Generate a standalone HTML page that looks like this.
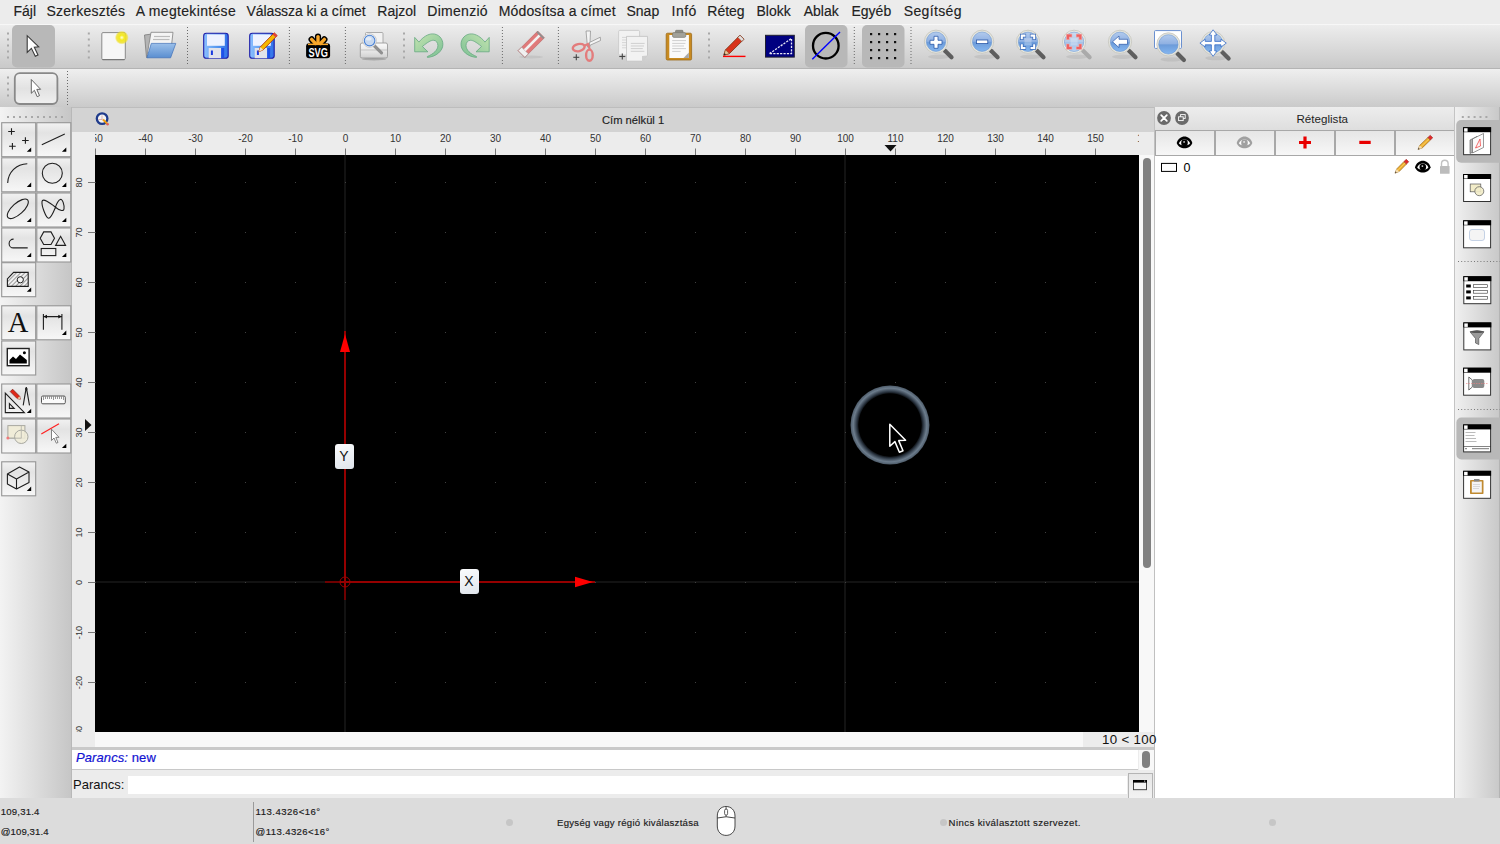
<!DOCTYPE html><html><head><meta charset="utf-8"><title>LibreCAD</title><style>
*{box-sizing:border-box;margin:0;padding:0}
html,body{width:1500px;height:844px;overflow:hidden;background:#ececec;font-family:"Liberation Sans",sans-serif;color:#222}
.abs{position:absolute}
#menubar{left:0;top:0;width:1500px;height:24px;background:#ececec}
#menubar span{position:absolute;top:3px;font-size:14px;color:#222;white-space:pre;-webkit-text-stroke:0.15px #222}
#tb1{left:0;top:24px;width:1500px;height:45px;background:linear-gradient(#ededed,#c9c9c9);border-top:1px solid #f7f7f7;border-bottom:1.5px solid #b4b4b4}
#tb2{left:0;top:69px;width:1500px;height:39px;background:linear-gradient(#efefef,#cacaca);border-bottom:1.5px solid #b6b6b6}
.hl{position:absolute;background:#b9b9b9;border-radius:5px}
.handle{position:absolute;width:3px;background-image:radial-gradient(circle,#9a9a9a 1px,transparent 1.3px);background-size:3px 6px}
.sep{position:absolute;width:1px;background-image:linear-gradient(#7a7a7a 50%,transparent 50%);background-size:1px 3px}
#ldock{left:0;top:107px;width:71px;height:691px;background:linear-gradient(90deg,#f3f3f3,#c6c6c6)}
#ldockb{left:71px;top:107px;width:1px;height:691px;background:#b8b8b8}
.tbtn{position:absolute;width:35px;height:35px;border:1px solid #a2a2a2;background:linear-gradient(#e4e4e4,#f6f6f6)}
#mdititle{left:72px;top:107px;width:1082px;height:25px;background:#d3d3d3}
#rtop{left:72px;top:132px;width:1082px;height:23px;background:#ececec}
#rleft{left:72px;top:155px;width:23px;height:592px;background:#ececec}
#canvas{left:95px;top:155px;width:1044px;height:577px;background:#000}
#rstrip{left:1139px;top:155px;width:15px;height:592px;background:#f8f8f8}
#bstrip{left:95px;top:732px;width:1044px;height:15px;background:#f8f8f8}
#scale{left:1083px;top:732px;width:71px;height:15px;background:#ececec}
#cmdsep{left:72px;top:747px;width:1082px;height:3px;background:#c9c9c9}
#cmdhist{left:72px;top:750px;width:1082px;height:20px;background:#fff;border-bottom:1px solid #c8c8c8}
#cmdline{left:72px;top:771px;width:1082px;height:27px;background:#ececec}
#status{left:0;top:798px;width:1500px;height:46px;background:#dcdcdc}
#dockb{left:1153.5px;top:107px;width:2px;height:691px;background:#c0c0c0}
#ldk{left:1155px;top:107px;width:300px;height:691px;background:#fff}
#ldktitle{left:1155px;top:107px;width:300px;height:23px;background:linear-gradient(#ededed,#dedede)}
#rtb{left:1455px;top:107px;width:45px;height:691px;background:linear-gradient(90deg,#f0f0f0,#c8c8c8)}
#rtbb{left:1454px;top:107px;width:1px;height:691px;background:#c4c4c4}
.lbtn{position:absolute;top:130px;height:26px;border:1px solid #a8a8a8;background:linear-gradient(#e6e6e6,#f7f7f7)}
.st{font-size:10px;color:#1a1a1a;white-space:pre;-webkit-text-stroke:0.15px #1a1a1a}
.rl{position:absolute;font-size:10px;color:#333;white-space:pre}
</style></head><body>
<div id="menubar" class="abs">
<span style="left:13.5px;letter-spacing:0px">Fájl</span>
<span style="left:46.5px;letter-spacing:0.23px">Szerkesztés</span>
<span style="left:135.7px;letter-spacing:0.33px">A megtekintése</span>
<span style="left:246.5px;letter-spacing:-0.08px">Válassza ki a címet</span>
<span style="left:377.3px;letter-spacing:0px">Rajzol</span>
<span style="left:427.3px;letter-spacing:0.28px">Dimenzió</span>
<span style="left:498.7px;letter-spacing:0.16px">Módosítsa a címet</span>
<span style="left:626.5px;letter-spacing:0px">Snap</span>
<span style="left:671.5px;letter-spacing:0.5px">Infó</span>
<span style="left:707.3px;letter-spacing:0px">Réteg</span>
<span style="left:756.5px;letter-spacing:0px">Blokk</span>
<span style="left:803.7px;letter-spacing:0px">Ablak</span>
<span style="left:851.5px;letter-spacing:0px">Egyéb</span>
<span style="left:903.7px;letter-spacing:0.36px">Segítség</span>
</div>
<div id="tb1" class="abs"></div>
<div id="tb2" class="abs"></div>
<svg class="abs" style="left:0;top:24px" width="1500" height="83" viewBox="0 24 1500 83"><defs>
<linearGradient id="lensg" x1="0" y1="0" x2="0" y2="1"><stop offset="0" stop-color="#b3cbed"/><stop offset="0.48" stop-color="#8fb0e2"/><stop offset="0.52" stop-color="#6c9bd9"/><stop offset="1" stop-color="#84b6f0"/></linearGradient>
<linearGradient id="lensf" x1="0" y1="0" x2="0" y2="1"><stop offset="0" stop-color="#ccdcf0"/><stop offset="0.5" stop-color="#b4cbe9"/><stop offset="0.52" stop-color="#a6c2e8"/><stop offset="1" stop-color="#b6d2f2"/></linearGradient>
<linearGradient id="saveg" x1="0" y1="0" x2="1" y2="0"><stop offset="0" stop-color="#8cc0ff"/><stop offset="0.5" stop-color="#5a9af0"/><stop offset="1" stop-color="#3070e8"/></linearGradient>
<linearGradient id="undog" x1="0" y1="0" x2="1" y2="1"><stop offset="0" stop-color="#c4e4b0"/><stop offset="1" stop-color="#7cc094"/></linearGradient>
<linearGradient id="foldg" x1="0" y1="0" x2="0" y2="1"><stop offset="0" stop-color="#9cc0ea"/><stop offset="1" stop-color="#5a8ed0"/></linearGradient>
<radialGradient id="glow"><stop offset="0" stop-color="#ffffe0"/><stop offset="0.35" stop-color="#f4ea20"/><stop offset="0.75" stop-color="#f0e020" stop-opacity="0.8"/><stop offset="1" stop-color="#f0e020" stop-opacity="0"/></radialGradient>
</defs><rect x="12" y="25" width="43" height="42.5" rx="5" fill="#b8b8b8"/><rect x="805" y="25" width="42.5" height="42.5" rx="5" fill="#b8b8b8"/><rect x="862" y="25" width="42.5" height="42.5" rx="5" fill="#b8b8b8"/><rect x="7.0" y="32.5" width="2" height="2" fill="#a8a8a8"/><rect x="7.0" y="38.5" width="2" height="2" fill="#a8a8a8"/><rect x="7.0" y="44.5" width="2" height="2" fill="#a8a8a8"/><rect x="7.0" y="50.5" width="2" height="2" fill="#a8a8a8"/><rect x="7.0" y="56.5" width="2" height="2" fill="#a8a8a8"/><rect x="87.8" y="32.5" width="2" height="2" fill="#a8a8a8"/><rect x="87.8" y="38.5" width="2" height="2" fill="#a8a8a8"/><rect x="87.8" y="44.5" width="2" height="2" fill="#a8a8a8"/><rect x="87.8" y="50.5" width="2" height="2" fill="#a8a8a8"/><rect x="87.8" y="56.5" width="2" height="2" fill="#a8a8a8"/><rect x="403.0" y="32.5" width="2" height="2" fill="#a8a8a8"/><rect x="403.0" y="38.5" width="2" height="2" fill="#a8a8a8"/><rect x="403.0" y="44.5" width="2" height="2" fill="#a8a8a8"/><rect x="403.0" y="50.5" width="2" height="2" fill="#a8a8a8"/><rect x="403.0" y="56.5" width="2" height="2" fill="#a8a8a8"/><rect x="708.0" y="32.5" width="2" height="2" fill="#a8a8a8"/><rect x="708.0" y="38.5" width="2" height="2" fill="#a8a8a8"/><rect x="708.0" y="44.5" width="2" height="2" fill="#a8a8a8"/><rect x="708.0" y="50.5" width="2" height="2" fill="#a8a8a8"/><rect x="708.0" y="56.5" width="2" height="2" fill="#a8a8a8"/><line x1="187.5" y1="27" x2="187.5" y2="66" stroke="#6a6a6a" stroke-width="1" stroke-dasharray="1 2"/><line x1="289.4" y1="27" x2="289.4" y2="66" stroke="#6a6a6a" stroke-width="1" stroke-dasharray="1 2"/><line x1="345.4" y1="27" x2="345.4" y2="66" stroke="#6a6a6a" stroke-width="1" stroke-dasharray="1 2"/><line x1="502.4" y1="27" x2="502.4" y2="66" stroke="#6a6a6a" stroke-width="1" stroke-dasharray="1 2"/><line x1="558.4" y1="27" x2="558.4" y2="66" stroke="#6a6a6a" stroke-width="1" stroke-dasharray="1 2"/><line x1="854.3" y1="27" x2="854.3" y2="66" stroke="#6a6a6a" stroke-width="1" stroke-dasharray="1 2"/><line x1="911" y1="27" x2="911" y2="66" stroke="#6a6a6a" stroke-width="1" stroke-dasharray="1 2"/><path d="M27.2 35.7 L27.2 52.4 L31.4 48.3 L35.3 56.2 L38 54.9 L34.3 47.2 L38.7 46.8 Z" fill="#fff" stroke="#3a3a3a" stroke-width="1.1" stroke-linejoin="miter"/><rect x="101.8" y="32.6" width="23.5" height="27" rx="1.2" fill="#f6f6f6" stroke="#8a8a8a" stroke-width="1"/><line x1="102.5" y1="59.6" x2="124.5" y2="59.6" stroke="#777" stroke-width="1.2"/><circle cx="121.8" cy="37.6" r="7" fill="url(#glow)"/><path d="M144.5 35 L152 34 L152 56 L146.5 57.5 Z" fill="#b4b4b4" stroke="#7a7a7a" stroke-width="0.8"/><path d="M151 32.3 L173 32.3 L171 50 L147 56 Z" fill="#f4f4f4" stroke="#808080" stroke-width="0.8"/><line x1="154" y1="36.5" x2="170" y2="36.5" stroke="#bbb" stroke-width="1.2"/><line x1="153" y1="39.5" x2="169.5" y2="39.5" stroke="#bbb" stroke-width="1.2"/><path d="M151.3 43.4 L175.8 43.4 L170.6 57.8 L146.9 57.8 Z" fill="url(#foldg)" stroke="#3f70b8" stroke-width="0.7"/><rect x="203.7" y="33.3" width="24.5" height="25" rx="2.6" fill="url(#saveg)" stroke="#1c1ca8" stroke-width="1.1"/><rect x="207.0" y="34.4" width="17.8" height="11.4" fill="#eef2ff"/><rect x="208.7" y="48" width="12.5" height="10.2" fill="#e2e2ea"/><rect x="210.89999999999998" y="50.5" width="2" height="4.5" fill="#1a3ae0"/><rect x="221.2" y="48" width="3" height="10" fill="#1f50e8"/><rect x="249.7" y="33.3" width="24.5" height="25" rx="2.6" fill="url(#saveg)" stroke="#1c1ca8" stroke-width="1.1"/><rect x="253.0" y="34.4" width="17.8" height="11.4" fill="#eef2ff"/><rect x="254.7" y="48" width="12.5" height="10.2" fill="#e2e2ea"/><rect x="256.9" y="50.5" width="2" height="4.5" fill="#1a3ae0"/><rect x="267.2" y="48" width="3" height="10" fill="#1f50e8"/><path d="M258.8 51.8 L260.3 47 L274.2 32.8 L277.2 35.6 L263.2 49.8 Z" fill="#f5b800" stroke="#b83a10" stroke-width="0.9"/><path d="M258.8 51.8 L260.3 47 L263.2 49.8 Z" fill="#f0e0c0"/><path d="M274.2 32.8 L277.2 35.6 L275.6 37.2 L272.6 34.4 Z" fill="#e04040"/><g stroke="#000" stroke-width="6.2" stroke-linecap="round"><line x1="318" y1="36.6" x2="318" y2="44"/><line x1="311.6" y1="39.4" x2="315" y2="44"/><line x1="324.4" y1="39.4" x2="321" y2="44"/></g><rect x="306.1" y="43.2" width="24" height="15" rx="3" fill="#000"/><g stroke="#f9a72a" stroke-width="3.4" stroke-linecap="round"><line x1="318" y1="36.6" x2="318" y2="43"/><line x1="311.6" y1="39.4" x2="315.5" y2="43.5"/><line x1="324.4" y1="39.4" x2="320.5" y2="43.5"/></g><rect x="308" y="43.6" width="20" height="1.5" fill="#f9a72a"/><text x="318.2" y="56.6" font-family="Liberation Sans" font-weight="bold" font-size="13.5" fill="#fff" text-anchor="middle" textLength="19.5" lengthAdjust="spacingAndGlyphs">SVG</text><defs><linearGradient id="prg" x1="0" y1="0" x2="0" y2="1"><stop offset="0" stop-color="#fbfbfb"/><stop offset="0.6" stop-color="#e4e4e4"/><stop offset="1" stop-color="#cfcfcf"/></linearGradient></defs><rect x="365.5" y="32.5" width="17.5" height="13" rx="1" fill="#f2f2f2" stroke="#a4a4a4" stroke-width="0.9"/><path d="M362 43 L386 43 Q387.5 43 387.5 45 L387.5 56.5 Q387.5 58 386 58 L362 58 Q360.3 58 360.3 56.5 L360.3 45 Q360.3 43 362 43 Z" fill="url(#prg)" stroke="#9a9a9a" stroke-width="0.9"/><rect x="361" y="49.5" width="26" height="1" fill="#c4c4c4"/><ellipse cx="374" cy="59.2" rx="12" ry="1.2" fill="#777" opacity="0.45"/><line x1="373.5" y1="45" x2="381.5" y2="52.8" stroke="#909090" stroke-width="3.2" stroke-linecap="round"/><circle cx="369.6" cy="40.6" r="6.8" fill="#fafafa" stroke="#b8b8b8" stroke-width="0.7"/><circle cx="369.6" cy="40.6" r="5.3" fill="#c6d8f0" stroke="#4a82d4" stroke-width="1.1"/><ellipse cx="368.6" cy="38.8" rx="3" ry="1.8" fill="#fff" opacity="0.5"/><path d="M414.7 37.4 L418.9 42.1 C423 37 428 33.9 432.6 33.9 C438.5 33.9 442.9 38.5 442.9 44.4 C442.9 51 436 56.8 427.4 57.4 L427.4 56.5 C433.5 54 437.9 50 437.9 45.6 C437.9 42.5 436 40.3 433.5 40.3 C431 40.3 428 41.8 422.4 46.5 L427.9 51.8 L414.7 51.8 Z" fill="url(#undog)" stroke="#64a880" stroke-width="0.8" stroke-linejoin="round"/><path d="M414.7 37.4 L418.9 42.1 C423 37 428 33.9 432.6 33.9 C438.5 33.9 442.9 38.5 442.9 44.4 C442.9 51 436 56.8 427.4 57.4 L427.4 56.5 C433.5 54 437.9 50 437.9 45.6 C437.9 42.5 436 40.3 433.5 40.3 C431 40.3 428 41.8 422.4 46.5 L427.9 51.8 L414.7 51.8 Z" transform="translate(903.9 0) scale(-1 1)" fill="url(#undog)" stroke="#64a880" stroke-width="0.8" stroke-linejoin="round"/><ellipse cx="531" cy="57" rx="12" ry="1.4" fill="#bbb" opacity="0.6"/><g transform="rotate(-45 531.2 44.2)"><rect x="517.4" y="39.5" width="27.6" height="9.5" fill="#e07a7a" stroke="#b86060" stroke-width="0.6"/><rect x="517.4" y="39.5" width="5" height="9.5" fill="#f0f0f0" stroke="#a08080" stroke-width="0.6"/><rect x="522.4" y="42.6" width="22" height="2.6" fill="#f2f2f2"/><rect x="543.2" y="39.5" width="1.8" height="9.5" fill="#909090"/></g><path d="M586 31 L590.5 31 L589.8 47 L587.5 47 Z" fill="#f4f4f4" stroke="#8a8a8a" stroke-width="0.7"/><path d="M589.5 42.5 L600.3 37.2 L600.5 40.5 L589.5 45.5 Z" fill="#f4f4f4" stroke="#8a8a8a" stroke-width="0.7"/><ellipse cx="578.7" cy="47.6" rx="6" ry="3.6" fill="none" stroke="#e37c7c" stroke-width="2.4" transform="rotate(-12 578.7 47.6)"/><ellipse cx="589.4" cy="55.2" rx="3.3" ry="5.6" fill="none" stroke="#e37c7c" stroke-width="2.4"/><path d="M583.8 46 L588 44 L590 50" fill="none" stroke="#e37c7c" stroke-width="2.2"/><g stroke="#444" stroke-width="1.1"><line x1="573.3" y1="57.3" x2="579.3" y2="57.3"/><line x1="576.3" y1="54.3" x2="576.3" y2="60.3"/></g><rect x="618.6" y="30.4" width="21" height="24.6" rx="1.2" fill="#f2f2f2" stroke="#c6c6c6" stroke-width="0.8"/><g stroke="#d6d6d6" stroke-width="1"><line x1="622" y1="37.4" x2="628" y2="37.4"/><line x1="622" y1="40" x2="628" y2="40"/><line x1="622" y1="42.6" x2="628" y2="42.6"/><line x1="622" y1="45.2" x2="628" y2="45.2"/><line x1="622" y1="47.8" x2="628" y2="47.8"/></g><path d="M626.5 36.4 L647.5 36.4 L647.5 55.5 L642 61.2 L626.5 61.2 Z" fill="#f2f2f2" stroke="#c2c2c2" stroke-width="0.8"/><path d="M642 61.2 L642 56 L647.5 55.5 Z" fill="#cfcfcf"/><g stroke="#cfcfcf" stroke-width="1"><line x1="630.8" y1="43.4" x2="644.6" y2="43.4"/><line x1="630.8" y1="46" x2="644" y2="46"/><line x1="630.8" y1="48.6" x2="642.8" y2="48.6"/><line x1="630.8" y1="51.3" x2="644.4" y2="51.3"/></g><g stroke="#444" stroke-width="1.1"><line x1="619.3" y1="56.5" x2="625.3" y2="56.5"/><line x1="622.3" y1="53.5" x2="622.3" y2="59.5"/></g><rect x="666.2" y="33.2" width="25.4" height="26.8" rx="1.3" fill="#c88a20" stroke="#9c6a18" stroke-width="0.8"/><rect x="669.3" y="35" width="19.6" height="23" fill="#fafafa"/><path d="M683.5 58 L688.9 52.5 L688.9 58 Z" fill="#a8a8a8"/><g stroke="#cfcfcf" stroke-width="1"><line x1="672.2" y1="40.6" x2="686" y2="40.6"/><line x1="672.2" y1="43.4" x2="685.4" y2="43.4"/><line x1="672.2" y1="46" x2="684" y2="46"/><line x1="672.2" y1="48.6" x2="686" y2="48.6"/><line x1="672.2" y1="51.4" x2="680.6" y2="51.4"/></g><rect x="675.5" y="30.3" width="7.5" height="3" rx="0.8" fill="#8c8c84" stroke="#6e6e66" stroke-width="0.6"/><rect x="672.5" y="32.6" width="13.3" height="4.8" rx="1.4" fill="#a2a29a" stroke="#76766e" stroke-width="0.6"/><line x1="723" y1="56.4" x2="745.5" y2="56.4" stroke="#f00" stroke-width="1.4"/><path d="M723.8 55.2 L725.5 49.8 L740 35.2 L744 39.2 L729.4 53.6 Z" fill="#d8341c" stroke="#7a3010" stroke-width="0.8"/><path d="M723.8 55.2 L725.5 49.8 L729.4 53.6 Z" fill="#e8c898" stroke="#7a3010" stroke-width="0.5"/><path d="M723.8 55.2 L724.5 53 L726 54.5 Z" fill="#222"/><path d="M737.8 37.4 L740 35.2 L744 39.2 L741.8 41.4 Z" fill="#e0e0e0" stroke="#7a3010" stroke-width="0.5"/><rect x="765.5" y="35.3" width="28.8" height="21.8" fill="#000080" stroke="#202030" stroke-width="1"/><path d="M769.5 53.6 L791.5 38.5 L791.5 53.6 Z" fill="none" stroke="#e8e8f4" stroke-width="1.3" stroke-dasharray="2.2 1.2"/><circle cx="825.8" cy="45.7" r="12.8" fill="none" stroke="#000" stroke-width="2.3"/><line x1="812.3" y1="59.3" x2="840" y2="32" stroke="#0000ff" stroke-width="1.4"/><rect x="870" y="33" width="2.2" height="2.2" fill="#111"/><rect x="870" y="41" width="2.2" height="2.2" fill="#111"/><rect x="870" y="49" width="2.2" height="2.2" fill="#111"/><rect x="870" y="57" width="2.2" height="2.2" fill="#111"/><rect x="878" y="33" width="2.2" height="2.2" fill="#111"/><rect x="878" y="41" width="2.2" height="2.2" fill="#111"/><rect x="878" y="49" width="2.2" height="2.2" fill="#111"/><rect x="878" y="57" width="2.2" height="2.2" fill="#111"/><rect x="886" y="33" width="2.2" height="2.2" fill="#111"/><rect x="886" y="41" width="2.2" height="2.2" fill="#111"/><rect x="886" y="49" width="2.2" height="2.2" fill="#111"/><rect x="886" y="57" width="2.2" height="2.2" fill="#111"/><rect x="894" y="33" width="2.2" height="2.2" fill="#111"/><rect x="894" y="41" width="2.2" height="2.2" fill="#111"/><rect x="894" y="49" width="2.2" height="2.2" fill="#111"/><rect x="894" y="57" width="2.2" height="2.2" fill="#111"/><g opacity="1"><ellipse cx="939" cy="56.7" rx="11" ry="2.2" fill="#000" opacity="0.07"/><line x1="945" y1="50.7" x2="951.5" y2="57.2" stroke="#5e5e5e" stroke-width="4.2" stroke-linecap="round"/><circle cx="936" cy="41.7" r="11.6" fill="#e6e6de" stroke="#c4c4bc" stroke-width="0.8"/><circle cx="936" cy="41.7" r="9.7" fill="url(#lensg)" stroke="#5f8fcf" stroke-width="0.5"/></g><path d="M934 36.3 h4 v4 h4 v4 h-4 v4 h-4 v-4 h-4 v-4 h4 z" fill="#fff" stroke="#2a58a8" stroke-width="0.8"/><g opacity="1"><ellipse cx="985.1" cy="56.7" rx="11" ry="2.2" fill="#000" opacity="0.07"/><line x1="991.1" y1="50.7" x2="997.6" y2="57.2" stroke="#5e5e5e" stroke-width="4.2" stroke-linecap="round"/><circle cx="982.1" cy="41.7" r="11.6" fill="#e6e6de" stroke="#c4c4bc" stroke-width="0.8"/><circle cx="982.1" cy="41.7" r="9.7" fill="url(#lensg)" stroke="#5f8fcf" stroke-width="0.5"/></g><rect x="976.4" y="40" width="11.4" height="3.6" fill="#fff" stroke="#2a58a8" stroke-width="0.8"/><g opacity="1"><ellipse cx="1031" cy="56.8" rx="11" ry="2.2" fill="#000" opacity="0.07"/><line x1="1037" y1="50.8" x2="1043.5" y2="57.3" stroke="#5e5e5e" stroke-width="4.2" stroke-linecap="round"/><circle cx="1028" cy="41.8" r="11.6" fill="#e6e6de" stroke="#c4c4bc" stroke-width="0.8"/><circle cx="1028" cy="41.8" r="9.7" fill="url(#lensg)" stroke="#5f8fcf" stroke-width="0.5"/></g><rect x="1024.5" y="38.3" width="7" height="7" fill="#fff" opacity="0.25"/><path d="M1021.8 39.9 V35.6 H1026.1 M1029.9 35.6 H1034.2 V39.9 M1034.2 43.7 V48.0 H1029.9 M1026.1 48.0 H1021.8 V43.7" fill="none" stroke="#3a6ab8" stroke-width="3.6"/><path d="M1021.8 39.3 V35.6 H1025.5 M1030.5 35.6 H1034.2 V39.3 M1034.2 44.3 V48.0 H1030.5 M1025.5 48.0 H1021.8 V44.3" fill="none" stroke="#fff" stroke-width="2.1"/><g opacity="1"><ellipse cx="1077.1" cy="56.8" rx="11" ry="2.2" fill="#000" opacity="0.07"/><line x1="1083.1" y1="50.8" x2="1089.6" y2="57.3" stroke="#aaaaaa" stroke-width="4.2" stroke-linecap="round"/><circle cx="1074.1" cy="41.8" r="11.6" fill="#ecece6" stroke="#c4c4bc" stroke-width="0.8"/><circle cx="1074.1" cy="41.8" r="9.7" fill="url(#lensf)" stroke="#5f8fcf" stroke-width="0.5"/></g><rect x="1070.6" y="38.3" width="7" height="7" fill="#fff" opacity="0.25"/><path d="M1067.9 39.9 V35.6 H1072.2 M1076.0 35.6 H1080.3 V39.9 M1080.3 43.7 V48.0 H1076.0 M1072.2 48.0 H1067.9 V43.7" fill="none" stroke="#eaa8a8" stroke-width="3.6"/><path d="M1067.9 39.3 V35.6 H1071.6 M1076.6 35.6 H1080.3 V39.3 M1080.3 44.3 V48.0 H1076.6 M1071.6 48.0 H1067.9 V44.3" fill="none" stroke="#f06060" stroke-width="2.1"/><g opacity="1"><ellipse cx="1123" cy="56.8" rx="11" ry="2.2" fill="#000" opacity="0.07"/><line x1="1129" y1="50.8" x2="1135.5" y2="57.3" stroke="#5e5e5e" stroke-width="4.2" stroke-linecap="round"/><circle cx="1120" cy="41.8" r="11.6" fill="#e6e6de" stroke="#c4c4bc" stroke-width="0.8"/><circle cx="1120" cy="41.8" r="9.7" fill="url(#lensg)" stroke="#5f8fcf" stroke-width="0.5"/></g><path d="M1112.5 41.8 L1119 36 L1119 39.3 L1127.5 39.3 L1127.5 44.3 L1119 44.3 L1119 47.6 Z" fill="#fff" stroke="#2a58a8" stroke-width="0.7"/><rect x="1154.5" y="30.6" width="27" height="17.8" rx="1" fill="#fff" stroke="#6a90d0" stroke-width="1"/><g opacity="1"><ellipse cx="1171.4" cy="59.4" rx="11" ry="2.2" fill="#000" opacity="0.07"/><line x1="1177.4" y1="53.4" x2="1183.9" y2="59.9" stroke="#5e5e5e" stroke-width="4.2" stroke-linecap="round"/><circle cx="1168.4" cy="44.4" r="11.6" fill="#e6e6de" stroke="#c4c4bc" stroke-width="0.8"/><circle cx="1168.4" cy="44.4" r="9.7" fill="url(#lensg)" stroke="#5f8fcf" stroke-width="0.5"/></g><g opacity="1"><ellipse cx="1216.1" cy="58.1" rx="11" ry="2.2" fill="#000" opacity="0.07"/><line x1="1222.1" y1="52.1" x2="1228.6" y2="58.6" stroke="#5e5e5e" stroke-width="4.2" stroke-linecap="round"/><circle cx="1213.1" cy="43.1" r="11.6" fill="#e6e6de" stroke="#c4c4bc" stroke-width="0.8"/><circle cx="1213.1" cy="43.1" r="9.7" fill="url(#lensg)" stroke="#5f8fcf" stroke-width="0.5"/></g><g fill="#fff" stroke="#3a70c8" stroke-width="0.8"><path d="M1213.1 29.8 L1217 35 L1214.8 35 L1214.8 41.4 L1221 41.4 L1221 39.2 L1226.3 43.1 L1221 47 L1221 44.8 L1214.8 44.8 L1214.8 51 L1217 51 L1213.1 56.3 L1209.2 51 L1211.4 51 L1211.4 44.8 L1205.2 44.8 L1205.2 47 L1199.9 43.1 L1205.2 39.2 L1205.2 41.4 L1211.4 41.4 L1211.4 35 L1209.2 35 Z"/></g><rect x="7" y="76.5" width="2" height="2" fill="#a8a8a8"/><rect x="7" y="82.5" width="2" height="2" fill="#a8a8a8"/><rect x="7" y="88.5" width="2" height="2" fill="#a8a8a8"/><rect x="7" y="94.5" width="2" height="2" fill="#a8a8a8"/><rect x="14.8" y="73.2" width="42.6" height="30.8" rx="5" fill="url(#tb2btn)" stroke="#898989" stroke-width="1.8"/><defs><linearGradient id="tb2btn" x1="0" y1="0" x2="0" y2="1"><stop offset="0" stop-color="#f2f2f2"/><stop offset="0.5" stop-color="#e2e2e2"/><stop offset="1" stop-color="#f0f0f0"/></linearGradient></defs><path d="M31.3 79.5 L31.3 93.3 L34.4 90.3 L37.2 96.7 L39.5 95.6 L36.8 89.4 L40.6 89.3 Z" fill="#fff" stroke="#555" stroke-width="0.9"/><line x1="67.5" y1="71" x2="67.5" y2="105" stroke="#6a6a6a" stroke-width="1" stroke-dasharray="1 2"/></svg>
<div id="ldock" class="abs"></div><div id="ldockb" class="abs"></div>
<svg class="abs" style="left:0;top:107px" width="72" height="400" viewBox="0 107 72 400"><defs><linearGradient id="btng" x1="0" y1="0" x2="0" y2="1"><stop offset="0" stop-color="#f2f2f2"/><stop offset="0.3" stop-color="#e3e3e3"/><stop offset="1" stop-color="#f7f7f7"/></linearGradient></defs><rect x="7" y="116" width="2" height="2" fill="#a8a8a8"/><rect x="13" y="116" width="2" height="2" fill="#a8a8a8"/><rect x="19" y="116" width="2" height="2" fill="#a8a8a8"/><rect x="25" y="116" width="2" height="2" fill="#a8a8a8"/><rect x="31" y="116" width="2" height="2" fill="#a8a8a8"/><rect x="37" y="116" width="2" height="2" fill="#a8a8a8"/><rect x="43" y="116" width="2" height="2" fill="#a8a8a8"/><rect x="49" y="116" width="2" height="2" fill="#a8a8a8"/><rect x="55" y="116" width="2" height="2" fill="#a8a8a8"/><rect x="61" y="116" width="2" height="2" fill="#a8a8a8"/><rect x="1.7" y="122.7" width="34" height="34" fill="url(#btng)" stroke="#959595" stroke-width="1.1"/><rect x="36.8" y="122.7" width="34" height="34" fill="url(#btng)" stroke="#959595" stroke-width="1.1"/><rect x="1.7" y="157.8" width="34" height="34" fill="url(#btng)" stroke="#959595" stroke-width="1.1"/><rect x="36.8" y="157.8" width="34" height="34" fill="url(#btng)" stroke="#959595" stroke-width="1.1"/><rect x="1.7" y="193.0" width="34" height="34" fill="url(#btng)" stroke="#959595" stroke-width="1.1"/><rect x="36.8" y="193.0" width="34" height="34" fill="url(#btng)" stroke="#959595" stroke-width="1.1"/><rect x="1.7" y="228.0" width="34" height="34" fill="url(#btng)" stroke="#959595" stroke-width="1.1"/><rect x="36.8" y="228.0" width="34" height="34" fill="url(#btng)" stroke="#959595" stroke-width="1.1"/><rect x="1.7" y="262.7" width="34" height="34" fill="url(#btng)" stroke="#959595" stroke-width="1.1"/><rect x="1.7" y="305.8" width="34" height="34" fill="url(#btng)" stroke="#959595" stroke-width="1.1"/><rect x="36.8" y="305.8" width="34" height="34" fill="url(#btng)" stroke="#959595" stroke-width="1.1"/><rect x="1.7" y="341.0" width="34" height="34" fill="url(#btng)" stroke="#959595" stroke-width="1.1"/><rect x="1.7" y="384.0" width="34" height="34" fill="url(#btng)" stroke="#959595" stroke-width="1.1"/><rect x="36.8" y="384.0" width="34" height="34" fill="url(#btng)" stroke="#959595" stroke-width="1.1"/><rect x="1.7" y="419.0" width="34" height="34" fill="url(#btng)" stroke="#959595" stroke-width="1.1"/><rect x="36.8" y="419.0" width="34" height="34" fill="url(#btng)" stroke="#959595" stroke-width="1.1"/><rect x="1.7" y="461.8" width="34" height="34" fill="url(#btng)" stroke="#959595" stroke-width="1.1"/><path d="M8.2 131.5 h6.6 M11.5 128.2 v6.6" fill="none" stroke="#1e1e1e" stroke-width="1.1" stroke-width="1.2"/><path d="M22.099999999999998 140.5 h6.6 M25.4 137.2 v6.6" fill="none" stroke="#1e1e1e" stroke-width="1.1" stroke-width="1.2"/><path d="M9.100000000000001 146.3 h6.6 M12.4 143.0 v6.6" fill="none" stroke="#1e1e1e" stroke-width="1.1" stroke-width="1.2"/><path d="M26.8 151.8 L31.2 151.8 L31.2 147.4 Z" fill="#000"/><line x1="41.8" y1="144.7" x2="64.8" y2="134.1" fill="none" stroke="#1e1e1e" stroke-width="1.1" stroke-width="1.3"/><path d="M61.9 151.8 L66.3 151.8 L66.3 147.4 Z" fill="#000"/><path d="M7.7 183.1 A19.8 19.8 0 0 1 27.3 163.7" fill="none" stroke="#1e1e1e" stroke-width="1.1" stroke-width="1.3"/><path d="M26.8 186.9 L31.2 186.9 L31.2 182.5 Z" fill="#000"/><circle cx="52.3" cy="173.3" r="10" fill="none" stroke="#1e1e1e" stroke-width="1.1"/><path d="M61.9 186.9 L66.3 186.9 L66.3 182.5 Z" fill="#000"/><ellipse cx="17.8" cy="208.8" rx="13.2" ry="5.6" transform="rotate(-42 17.8 208.8)" fill="none" stroke="#1e1e1e" stroke-width="1.1" stroke-width="1.2"/><path d="M26.8 222.1 L31.2 222.1 L31.2 217.7 Z" fill="#000"/><path d="M42 201.6 C42.5 197.5 50 203 55.5 207.2 C59 210 63.5 212 64 209 C64.5 205 62.5 198.5 60.3 199.5 C58 200.5 56.5 204 55.5 207.2 C53.5 212 51 218.5 48.6 218.3 C46 218 41.5 206 42 201.6 Z" fill="none" stroke="#1e1e1e" stroke-width="1.1" stroke-width="1.2"/><path d="M61.9 222.1 L66.3 222.1 L66.3 217.7 Z" fill="#000"/><path d="M13.6 239.1 A4.4 4.4 0 0 0 13.4 247.9 L27.7 247.9" fill="none" stroke="#1e1e1e" stroke-width="1.1" stroke-width="1.3"/><path d="M26.8 257.1 L31.2 257.1 L31.2 252.7 Z" fill="#000"/><path d="M40.2 238.2 L43.7 231.9 L51 231.9 L54.5 238.2 L51 244.5 L43.7 244.5 Z" fill="none" stroke="#1e1e1e" stroke-width="1.1"/><path d="M55.6 245.4 L65.6 245.4 L60.6 236.3 Z" fill="none" stroke="#1e1e1e" stroke-width="1.1"/><rect x="41.2" y="248.5" width="14.6" height="7.1" fill="none" stroke="#1e1e1e" stroke-width="1.1"/><path d="M61.9 257.1 L66.3 257.1 L66.3 252.7 Z" fill="#000"/><defs><pattern id="hp" width="3" height="3" patternUnits="userSpaceOnUse" patternTransform="rotate(45)"><rect width="3" height="3" fill="#f0f0f0"/><line x1="0" y1="0" x2="0" y2="3" stroke="#444" stroke-width="1"/></pattern></defs><path d="M7.4 278.8 L13.6 272.4 L28.2 272.4 L28.2 286.4 L7.4 286.4 Z" fill="url(#hp)" stroke="#1e1e1e" stroke-width="1.1"/><circle cx="20.3" cy="279.8" r="3.1" fill="#f4f4f4" stroke="#1e1e1e" stroke-width="1"/><path d="M26.8 291.8 L31.2 291.8 L31.2 287.4 Z" fill="#000"/><text x="18" y="331.8" font-family="Liberation Serif" font-size="28.5" fill="#111" text-anchor="middle">A</text><path d="M43.4 314 V329.8 M61.9 314 V329.8 M43.4 316.6 H61.9" fill="none" stroke="#1e1e1e" stroke-width="1.1" stroke-width="1.2"/><path d="M43.6 316.6 L47 314.8 L47 318.4 Z M61.7 316.6 L58.3 314.8 L58.3 318.4 Z" fill="#111"/><path d="M61.9 334.90000000000003 L66.3 334.90000000000003 L66.3 330.5 Z" fill="#000"/><rect x="7.3" y="348.5" width="21.8" height="17.2" fill="#fff" stroke="#222" stroke-width="1.4"/><path d="M9.5 363.5 L9.5 360 L13 356.5 L16 359 L20 354.5 L26.8 360 L26.8 363.5 Z" fill="#000"/><circle cx="24.4" cy="352.8" r="1.5" fill="#000"/><path d="M5.3 393.2 L5.3 412.6 L24.4 412.6 Z" fill="none" stroke="#1e1e1e" stroke-width="1.1" stroke-width="1.3"/><path d="M9.4 403.5 L9.4 408.4 L14.2 408.4 Z" fill="none" stroke="#1e1e1e" stroke-width="1.1" stroke-width="1.1"/><path d="M10.2 391.6 L12.6 389.2 L19.6 396.2 L20.4 399.2 L17.2 398.6 Z" fill="#e02818" stroke="#7a1a10" stroke-width="0.7"/><path d="M17.2 398.6 L19.6 396.2 L20.4 399.2 Z" fill="#e8c8a0"/><path d="M26.3 387.2 L23.2 405.4 M26.3 387.2 L29.5 405.4" fill="none" stroke="#1e1e1e" stroke-width="1.1" stroke-width="1.2"/><circle cx="26.3" cy="389" r="1.2" fill="#222"/><path d="M26.8 413.1 L31.2 413.1 L31.2 408.7 Z" fill="#000"/><rect x="41.5" y="396" width="23.8" height="7.8" rx="1.3" fill="#fafafa" stroke="#555" stroke-width="1"/><path d="M43.5 396.5 v3.5M45.5 396.5 v2.5M47.5 396.5 v2.5M49.5 396.5 v2.5M51.5 396.5 v2.5M53.5 396.5 v3.5M55.5 396.5 v2.5M57.5 396.5 v2.5M59.5 396.5 v2.5M61.5 396.5 v2.5M63.5 396.5 v3.5" stroke="#555" stroke-width="0.6"/><rect x="7.9" y="425.6" width="17" height="12.6" fill="#f0ecd8" stroke="#a8a8a0" stroke-width="1"/><circle cx="21.3" cy="436.8" r="6.7" fill="#f0ecd8" fill-opacity="0.85" stroke="#a8a8a0" stroke-width="1"/><path d="M7.9 438.2 H21.3 V425.6" fill="none" stroke="#b0b0a8" stroke-width="0.8"/><circle cx="7.9" cy="438.1" r="1.5" fill="#f07a7a"/><line x1="41.3" y1="434" x2="59" y2="423.8" stroke="#ff2020" stroke-width="1.2"/><path d="M51.5 429.2 L51.5 440.5 L54 438 L56.3 443.2 L58 442.5 L55.8 437.4 L59 437.3 Z" fill="#fff" stroke="#666" stroke-width="0.8"/><path d="M61.9 448.1 L66.3 448.1 L66.3 443.7 Z" fill="#000"/><path d="M7.4 474 L19.5 467 L29 472 L29 482.5 L16.5 489 L7.4 484 Z M7.4 474 L16.5 479 L29 472 M16.5 479 V489" fill="none" stroke="#1e1e1e" stroke-width="1.1" stroke-width="1.2" stroke-linejoin="round"/><path d="M26.8 490.90000000000003 L31.2 490.90000000000003 L31.2 486.5 Z" fill="#000"/></svg>
<div id="mdititle" class="abs"></div>
<div class="abs" style="left:72px;top:107px;width:1082px;height:1px;background:#bdbdbd"></div>
<div class="abs" style="left:602px;top:113.5px;font-size:11.2px;color:#1e1e1e;white-space:pre;-webkit-text-stroke:0.15px #1e1e1e">Cím nélkül 1</div>
<svg class="abs" style="left:93px;top:110px" width="18" height="18" viewBox="93 110 18 18"><circle cx="102.1" cy="118.6" r="5.3" fill="#f4f4f4" stroke="#203c8c" stroke-width="2.3"/><path d="M98.5 119.5 h4 M102 115.5 v4" stroke="#c88" stroke-width="0.6"/><line x1="103" y1="119.5" x2="107.8" y2="124.4" stroke="#f0a010" stroke-width="2"/><circle cx="107.6" cy="124.2" r="1.2" fill="#e06060"/></svg>
<div id="rtop" class="abs"></div><div id="rleft" class="abs"></div>
<div id="canvas" class="abs"></div>
<svg class="abs" style="left:95px;top:132px" width="1044" height="23" viewBox="95 132 1044 23"><g stroke="#777" stroke-width="1"><line x1="95.5" y1="148.5" x2="95.5" y2="155"/><line x1="145.5" y1="148.5" x2="145.5" y2="155"/><line x1="195.5" y1="148.5" x2="195.5" y2="155"/><line x1="245.5" y1="148.5" x2="245.5" y2="155"/><line x1="295.5" y1="148.5" x2="295.5" y2="155"/><line x1="345.5" y1="148.5" x2="345.5" y2="155"/><line x1="395.5" y1="148.5" x2="395.5" y2="155"/><line x1="445.5" y1="148.5" x2="445.5" y2="155"/><line x1="495.5" y1="148.5" x2="495.5" y2="155"/><line x1="545.5" y1="148.5" x2="545.5" y2="155"/><line x1="595.5" y1="148.5" x2="595.5" y2="155"/><line x1="645.5" y1="148.5" x2="645.5" y2="155"/><line x1="695.5" y1="148.5" x2="695.5" y2="155"/><line x1="745.5" y1="148.5" x2="745.5" y2="155"/><line x1="795.5" y1="148.5" x2="795.5" y2="155"/><line x1="845.5" y1="148.5" x2="845.5" y2="155"/><line x1="895.5" y1="148.5" x2="895.5" y2="155"/><line x1="945.5" y1="148.5" x2="945.5" y2="155"/><line x1="995.5" y1="148.5" x2="995.5" y2="155"/><line x1="1045.5" y1="148.5" x2="1045.5" y2="155"/><line x1="1095.5" y1="148.5" x2="1095.5" y2="155"/></g><g font-family="Liberation Sans" font-size="10" fill="#333" text-anchor="middle"><text x="95.5" y="141.5">-50</text><text x="145.5" y="141.5">-40</text><text x="195.5" y="141.5">-30</text><text x="245.5" y="141.5">-20</text><text x="295.5" y="141.5">-10</text><text x="345.5" y="141.5">0</text><text x="395.5" y="141.5">10</text><text x="445.5" y="141.5">20</text><text x="495.5" y="141.5">30</text><text x="545.5" y="141.5">40</text><text x="595.5" y="141.5">50</text><text x="645.5" y="141.5">60</text><text x="695.5" y="141.5">70</text><text x="745.5" y="141.5">80</text><text x="795.5" y="141.5">90</text><text x="845.5" y="141.5">100</text><text x="895.5" y="141.5">110</text><text x="945.5" y="141.5">120</text><text x="995.5" y="141.5">130</text><text x="1045.5" y="141.5">140</text><text x="1095.5" y="141.5">150</text><text x="1145.5" y="141.5">160</text></g><path d="M884.5 145 L896.5 145 L890.5 151.5 Z" fill="#111"/></svg>
<svg class="abs" style="left:72px;top:155px" width="23" height="577" viewBox="72 155 23 577"><g stroke="#777" stroke-width="1"><line x1="88" y1="732.5" x2="95" y2="732.5"/><line x1="88" y1="682.5" x2="95" y2="682.5"/><line x1="88" y1="632.5" x2="95" y2="632.5"/><line x1="88" y1="582.5" x2="95" y2="582.5"/><line x1="88" y1="532.5" x2="95" y2="532.5"/><line x1="88" y1="482.5" x2="95" y2="482.5"/><line x1="88" y1="432.5" x2="95" y2="432.5"/><line x1="88" y1="382.5" x2="95" y2="382.5"/><line x1="88" y1="332.5" x2="95" y2="332.5"/><line x1="88" y1="282.5" x2="95" y2="282.5"/><line x1="88" y1="232.5" x2="95" y2="232.5"/><line x1="88" y1="182.5" x2="95" y2="182.5"/></g><g font-family="Liberation Sans" font-size="9.2" fill="#333" text-anchor="middle"><text transform="translate(81.5 732.5) rotate(-90)" x="0" y="0">-30</text><text transform="translate(81.5 682.5) rotate(-90)" x="0" y="0">-20</text><text transform="translate(81.5 632.5) rotate(-90)" x="0" y="0">-10</text><text transform="translate(81.5 582.5) rotate(-90)" x="0" y="0">0</text><text transform="translate(81.5 532.5) rotate(-90)" x="0" y="0">10</text><text transform="translate(81.5 482.5) rotate(-90)" x="0" y="0">20</text><text transform="translate(81.5 432.5) rotate(-90)" x="0" y="0">30</text><text transform="translate(81.5 382.5) rotate(-90)" x="0" y="0">40</text><text transform="translate(81.5 332.5) rotate(-90)" x="0" y="0">50</text><text transform="translate(81.5 282.5) rotate(-90)" x="0" y="0">60</text><text transform="translate(81.5 232.5) rotate(-90)" x="0" y="0">70</text><text transform="translate(81.5 182.5) rotate(-90)" x="0" y="0">80</text></g><path d="M85 419 L85 431 L91.5 425 Z" fill="#111"/></svg>
<svg class="abs" style="left:95px;top:155px" width="1044" height="577" viewBox="95 155 1044 577"><g stroke="#181818" stroke-width="1.5"><line x1="345" y1="155" x2="345" y2="732"/><line x1="845" y1="155" x2="845" y2="732"/><line x1="95" y1="582" x2="1139" y2="582"/></g><path fill="#404040" d="M95 682h1v1h-1zM95 632h1v1h-1zM95 582h1v1h-1zM95 532h1v1h-1zM95 482h1v1h-1zM95 432h1v1h-1zM95 382h1v1h-1zM95 332h1v1h-1zM95 282h1v1h-1zM95 232h1v1h-1zM95 182h1v1h-1zM145 682h1v1h-1zM145 632h1v1h-1zM145 582h1v1h-1zM145 532h1v1h-1zM145 482h1v1h-1zM145 432h1v1h-1zM145 382h1v1h-1zM145 332h1v1h-1zM145 282h1v1h-1zM145 232h1v1h-1zM145 182h1v1h-1zM195 682h1v1h-1zM195 632h1v1h-1zM195 582h1v1h-1zM195 532h1v1h-1zM195 482h1v1h-1zM195 432h1v1h-1zM195 382h1v1h-1zM195 332h1v1h-1zM195 282h1v1h-1zM195 232h1v1h-1zM195 182h1v1h-1zM245 682h1v1h-1zM245 632h1v1h-1zM245 582h1v1h-1zM245 532h1v1h-1zM245 482h1v1h-1zM245 432h1v1h-1zM245 382h1v1h-1zM245 332h1v1h-1zM245 282h1v1h-1zM245 232h1v1h-1zM245 182h1v1h-1zM295 682h1v1h-1zM295 632h1v1h-1zM295 582h1v1h-1zM295 532h1v1h-1zM295 482h1v1h-1zM295 432h1v1h-1zM295 382h1v1h-1zM295 332h1v1h-1zM295 282h1v1h-1zM295 232h1v1h-1zM295 182h1v1h-1zM345 682h1v1h-1zM345 632h1v1h-1zM345 582h1v1h-1zM345 532h1v1h-1zM345 482h1v1h-1zM345 432h1v1h-1zM345 382h1v1h-1zM345 332h1v1h-1zM345 282h1v1h-1zM345 232h1v1h-1zM345 182h1v1h-1zM395 682h1v1h-1zM395 632h1v1h-1zM395 582h1v1h-1zM395 532h1v1h-1zM395 482h1v1h-1zM395 432h1v1h-1zM395 382h1v1h-1zM395 332h1v1h-1zM395 282h1v1h-1zM395 232h1v1h-1zM395 182h1v1h-1zM445 682h1v1h-1zM445 632h1v1h-1zM445 582h1v1h-1zM445 532h1v1h-1zM445 482h1v1h-1zM445 432h1v1h-1zM445 382h1v1h-1zM445 332h1v1h-1zM445 282h1v1h-1zM445 232h1v1h-1zM445 182h1v1h-1zM495 682h1v1h-1zM495 632h1v1h-1zM495 582h1v1h-1zM495 532h1v1h-1zM495 482h1v1h-1zM495 432h1v1h-1zM495 382h1v1h-1zM495 332h1v1h-1zM495 282h1v1h-1zM495 232h1v1h-1zM495 182h1v1h-1zM545 682h1v1h-1zM545 632h1v1h-1zM545 582h1v1h-1zM545 532h1v1h-1zM545 482h1v1h-1zM545 432h1v1h-1zM545 382h1v1h-1zM545 332h1v1h-1zM545 282h1v1h-1zM545 232h1v1h-1zM545 182h1v1h-1zM595 682h1v1h-1zM595 632h1v1h-1zM595 582h1v1h-1zM595 532h1v1h-1zM595 482h1v1h-1zM595 432h1v1h-1zM595 382h1v1h-1zM595 332h1v1h-1zM595 282h1v1h-1zM595 232h1v1h-1zM595 182h1v1h-1zM645 682h1v1h-1zM645 632h1v1h-1zM645 582h1v1h-1zM645 532h1v1h-1zM645 482h1v1h-1zM645 432h1v1h-1zM645 382h1v1h-1zM645 332h1v1h-1zM645 282h1v1h-1zM645 232h1v1h-1zM645 182h1v1h-1zM695 682h1v1h-1zM695 632h1v1h-1zM695 582h1v1h-1zM695 532h1v1h-1zM695 482h1v1h-1zM695 432h1v1h-1zM695 382h1v1h-1zM695 332h1v1h-1zM695 282h1v1h-1zM695 232h1v1h-1zM695 182h1v1h-1zM745 682h1v1h-1zM745 632h1v1h-1zM745 582h1v1h-1zM745 532h1v1h-1zM745 482h1v1h-1zM745 432h1v1h-1zM745 382h1v1h-1zM745 332h1v1h-1zM745 282h1v1h-1zM745 232h1v1h-1zM745 182h1v1h-1zM795 682h1v1h-1zM795 632h1v1h-1zM795 582h1v1h-1zM795 532h1v1h-1zM795 482h1v1h-1zM795 432h1v1h-1zM795 382h1v1h-1zM795 332h1v1h-1zM795 282h1v1h-1zM795 232h1v1h-1zM795 182h1v1h-1zM845 682h1v1h-1zM845 632h1v1h-1zM845 582h1v1h-1zM845 532h1v1h-1zM845 482h1v1h-1zM845 432h1v1h-1zM845 382h1v1h-1zM845 332h1v1h-1zM845 282h1v1h-1zM845 232h1v1h-1zM845 182h1v1h-1zM895 682h1v1h-1zM895 632h1v1h-1zM895 582h1v1h-1zM895 532h1v1h-1zM895 482h1v1h-1zM895 432h1v1h-1zM895 382h1v1h-1zM895 332h1v1h-1zM895 282h1v1h-1zM895 232h1v1h-1zM895 182h1v1h-1zM945 682h1v1h-1zM945 632h1v1h-1zM945 582h1v1h-1zM945 532h1v1h-1zM945 482h1v1h-1zM945 432h1v1h-1zM945 382h1v1h-1zM945 332h1v1h-1zM945 282h1v1h-1zM945 232h1v1h-1zM945 182h1v1h-1zM995 682h1v1h-1zM995 632h1v1h-1zM995 582h1v1h-1zM995 532h1v1h-1zM995 482h1v1h-1zM995 432h1v1h-1zM995 382h1v1h-1zM995 332h1v1h-1zM995 282h1v1h-1zM995 232h1v1h-1zM995 182h1v1h-1zM1045 682h1v1h-1zM1045 632h1v1h-1zM1045 582h1v1h-1zM1045 532h1v1h-1zM1045 482h1v1h-1zM1045 432h1v1h-1zM1045 382h1v1h-1zM1045 332h1v1h-1zM1045 282h1v1h-1zM1045 232h1v1h-1zM1045 182h1v1h-1zM1095 682h1v1h-1zM1095 632h1v1h-1zM1095 582h1v1h-1zM1095 532h1v1h-1zM1095 482h1v1h-1zM1095 432h1v1h-1zM1095 382h1v1h-1zM1095 332h1v1h-1zM1095 282h1v1h-1zM1095 232h1v1h-1zM1095 182h1v1h-1z"/><g stroke="#6e0000" stroke-width="2"><line x1="345" y1="582" x2="345" y2="600"/><line x1="325" y1="582" x2="345" y2="582"/></g><g stroke="#950000" stroke-width="2"><line x1="345" y1="331" x2="345" y2="587"/><line x1="340" y1="582" x2="595" y2="582"/></g><circle cx="345" cy="582" r="5" fill="none" stroke="#9c0000" stroke-width="1"/><path fill="#ff0000" d="M345 334 L350 352 L340 352 Z"/><path fill="#ff0000" d="M593 582 L575 576.7 L575 587.3 Z"/><defs><radialGradient id="ring" cx="0.5" cy="0.5" r="0.5"><stop offset="0.78" stop-color="#000"/><stop offset="0.84" stop-color="#2a3440"/><stop offset="0.93" stop-color="#6c7c8c"/><stop offset="1" stop-color="#4e5c6a"/></radialGradient></defs><circle cx="890" cy="425" r="39.5" fill="url(#ring)"/><circle cx="890" cy="425" r="31.5" fill="#000"/><path d="M889.8 424.2 L889.8 446.3 L894.9 441.6 L899.4 452.2 L903 450.7 L898.7 440.6 L905.6 440.3 Z" fill="#000" stroke="#fff" stroke-width="1.5" stroke-linejoin="round"/></svg>
<div class="abs" style="left:334.5px;top:443.5px;width:19px;height:25px;border-radius:3px;background:linear-gradient(160deg,#fbfcfd,#dfe5ec);font-size:14px;line-height:25px;text-align:center;color:#111">Y</div>
<div class="abs" style="left:459.5px;top:568.5px;width:19px;height:25px;border-radius:3px;background:linear-gradient(160deg,#fbfcfd,#dfe5ec);font-size:14px;line-height:25px;text-align:center;color:#111">X</div>
<div id="rstrip" class="abs"></div><div id="bstrip" class="abs"></div>
<div id="scale" class="abs"></div>
<div class="abs" style="left:1143px;top:158px;width:8px;height:410px;border-radius:4px;background:#808080"></div>
<div id="cmdsep" class="abs"></div><div id="cmdhist" class="abs"></div><div id="cmdline" class="abs"></div>
<div class="abs" style="left:73px;top:777px;font-size:13px;line-height:16px;color:#111">Parancs:</div>
<div class="abs" style="left:128px;top:776px;width:999px;height:18px;background:#fff"></div>
<div class="abs" style="left:1138px;top:750px;width:16px;height:20px;background:#f8f8f8;border-left:1px solid #ececec"></div>
<div class="abs" style="left:1142px;top:750.5px;width:8px;height:17px;border-radius:4px;background:#808080"></div>
<div class="abs" style="left:1127.5px;top:772.5px;width:25px;height:25px;background:linear-gradient(#e6e6e6,#f2f2f2);border:1px solid #b4b4b4;border-bottom:none"></div>
<svg class="abs" style="left:1130px;top:777px" width="20" height="16" viewBox="1130 777 20 16"><rect x="1133.5" y="780.5" width="13" height="9.2" fill="#f4f4f4" stroke="#333" stroke-width="0.9"/><rect x="1133" y="780" width="14" height="2.6" fill="#000"/><rect x="1144.2" y="780.6" width="1" height="1" fill="#fff"/></svg>
<div id="dockb" class="abs"></div><div id="ldk" class="abs"></div><div id="ldktitle" class="abs"></div>
<div class="abs" style="left:1296.5px;top:111.5px;font-size:11.6px;color:#1e1e1e;white-space:pre">Réteglista</div>
<div class="lbtn" style="left:1155px;width:60px"></div>
<div class="lbtn" style="left:1215px;width:60px"></div>
<div class="lbtn" style="left:1275px;width:60px"></div>
<div class="lbtn" style="left:1335px;width:60px"></div>
<div class="lbtn" style="left:1395px;width:60px"></div>
<svg class="abs" style="left:1155px;top:107px" width="300" height="80" viewBox="1155 107 300 80"><circle cx="1164" cy="118" r="6.9" fill="#6a6a6a"/><path d="M1161.2 115.2 L1166.8 120.8 M1166.8 115.2 L1161.2 120.8" stroke="#fff" stroke-width="1.8" stroke-linecap="round"/><circle cx="1182" cy="118" r="6.9" fill="#6a6a6a"/><rect x="1180.6" y="114.6" width="4.6" height="3.8" fill="none" stroke="#fff" stroke-width="0.9"/><rect x="1178.6" y="116.8" width="4.6" height="3.8" fill="#6a6a6a" stroke="#fff" stroke-width="0.9"/><path d="M1176.7 143.0 C1179.0 134.3 1190.0 134.3 1192.3 143.0 C1190.0 150.1 1179.0 150.1 1176.7 143.0 Z" fill="#000"/><path d="M1178.9 143.3 C1180.7 138.1 1188.3 138.1 1190.1 143.3 C1188.3 146.3 1180.7 146.3 1178.9 143.3 Z" fill="#fff"/><circle cx="1184.5" cy="142.9" r="3.3" fill="#000"/><circle cx="1184.1" cy="141.9" r="0.9" fill="#fff" opacity="0.8"/><path d="M1236.7 143.0 C1239.0 134.3 1250.0 134.3 1252.3 143.0 C1250.0 150.1 1239.0 150.1 1236.7 143.0 Z" fill="#a0a0a0"/><path d="M1238.9 143.3 C1240.7 138.1 1248.3 138.1 1250.1 143.3 C1248.3 146.3 1240.7 146.3 1238.9 143.3 Z" fill="#fff"/><circle cx="1244.5" cy="142.9" r="3.3" fill="#a0a0a0"/><circle cx="1244.1" cy="141.9" r="0.9" fill="#fff" opacity="0.8"/><path d="M1303.4 136.5 h3.2 v4.4 h4.4 v3.2 h-4.4 v4.4 h-3.2 v-4.4 h-4.4 v-3.2 h4.4 z" fill="#e80000"/><rect x="1359.3" y="140.8" width="11.4" height="3.2" fill="#e80000"/><path d="M1418.00 149.50 L1422.27 147.88 L1430.44 140.02 L1427.95 137.42 L1419.78 145.29 Z" fill="#f0b030" stroke="#8a5a18" stroke-width="0.6"/><path d="M1430.44 140.02 L1432.75 137.80 L1430.25 135.20 L1427.95 137.42 Z" fill="#e02828" stroke="#902020" stroke-width="0.5"/><path d="M1418.00 149.50 L1422.27 147.88 L1419.78 145.29 Z" fill="#f4dcb0"/><path d="M1418.00 149.50 L1419.71 148.97 L1418.60 147.81 Z" fill="#333"/><line x1="1421.03" y1="146.59" x2="1429.19" y2="138.72" stroke="#fff2a0" stroke-width="0.6" opacity="0.7"/><rect x="1161.5" y="163.4" width="15" height="8" fill="#fff" stroke="#000" stroke-width="1"/><text x="1183.4" y="171.6" font-family="Liberation Sans" font-size="12.5" fill="#000">0</text><path d="M1395.00 173.20 L1399.23 171.47 L1406.54 164.04 L1403.97 161.52 L1396.66 168.94 Z" fill="#f0b030" stroke="#8a5a18" stroke-width="0.6"/><path d="M1406.54 164.04 L1408.78 161.76 L1406.22 159.24 L1403.97 161.52 Z" fill="#e02828" stroke="#902020" stroke-width="0.5"/><path d="M1395.00 173.20 L1399.23 171.47 L1396.66 168.94 Z" fill="#f4dcb0"/><path d="M1395.00 173.20 L1396.69 172.62 L1395.55 171.50 Z" fill="#333"/><line x1="1397.95" y1="170.21" x2="1405.26" y2="162.78" stroke="#fff2a0" stroke-width="0.6" opacity="0.7"/><path d="M1415.0 167.2 C1417.3 158.5 1428.3 158.5 1430.6 167.2 C1428.3 174.29999999999998 1417.3 174.29999999999998 1415.0 167.2 Z" fill="#000"/><path d="M1417.2 167.5 C1419.0 162.29999999999998 1426.6 162.29999999999998 1428.3999999999999 167.5 C1426.6 170.5 1419.0 170.5 1417.2 167.5 Z" fill="#fff"/><circle cx="1422.8" cy="167.1" r="3.3" fill="#000"/><circle cx="1422.3999999999999" cy="166.1" r="0.9" fill="#fff" opacity="0.8"/><path d="M1441.5 166 v-2.5 a3.3 3.3 0 0 1 6.6 0 v2.5" fill="none" stroke="#c2c2c2" stroke-width="1.4"/><rect x="1440" y="166" width="9.6" height="7.8" rx="0.6" fill="#bcbcbc"/></svg>
<div id="rtbb" class="abs"></div><div id="rtb" class="abs"></div>
<div class="abs" style="left:1498.5px;top:107px;width:1.5px;height:691px;background:#b4b4b4"></div>
<svg class="abs" style="left:1455px;top:107px" width="45" height="400" viewBox="1455 107 45 400"><rect x="1461.8" y="116" width="2" height="2" fill="#a8a8a8"/><rect x="1467.7" y="116" width="2" height="2" fill="#a8a8a8"/><rect x="1473.6" y="116" width="2" height="2" fill="#a8a8a8"/><rect x="1479.5" y="116" width="2" height="2" fill="#a8a8a8"/><rect x="1485.4" y="116" width="2" height="2" fill="#a8a8a8"/><rect x="1456.2" y="120.1" width="48" height="42.6" rx="5" fill="#b8b8b8"/><rect x="1456.4" y="417.6" width="48" height="41.8" rx="5" fill="#b8b8b8"/><line x1="1458" y1="261.5" x2="1500" y2="261.5" stroke="#777" stroke-width="1" stroke-dasharray="1 2.2"/><line x1="1458" y1="409.5" x2="1500" y2="409.5" stroke="#777" stroke-width="1" stroke-dasharray="1 2.2"/><rect x="1463.6" y="127.7" width="27" height="27" fill="#fff" stroke="#333" stroke-width="1"/><rect x="1463.1" y="127.2" width="28" height="5" fill="#000"/><rect x="1464.1" y="128.2" width="3.5" height="3.5" fill="#fff"/><path d="M1470 140 L1477 136.5 L1477 150 L1470 153.5 Z" fill="#b0b0b0" stroke="#555" stroke-width="0.6"/><path d="M1472.5 139 L1483.5 133.5 L1483.5 147.5 L1472.5 153 Z" fill="#fafafa" stroke="#555" stroke-width="0.6"/><path d="M1475.5 148 L1480 139 L1480.5 146 Z" fill="none" stroke="#f03030" stroke-width="0.7"/><rect x="1463.6" y="174.5" width="27" height="27" fill="#fff" stroke="#333" stroke-width="1"/><rect x="1463.1" y="174" width="28" height="5" fill="#000"/><rect x="1464.1" y="175" width="3.5" height="3.5" fill="#fff"/><rect x="1470.2" y="184" width="10.6" height="7.8" fill="#f2ecc8" stroke="#555" stroke-width="0.7"/><circle cx="1479.3" cy="191.2" r="4.5" fill="#f2ecc8" fill-opacity="0.9" stroke="#555" stroke-width="0.7"/><rect x="1463.6" y="220.8" width="27" height="27" fill="#fff" stroke="#333" stroke-width="1"/><rect x="1463.1" y="220.3" width="28" height="5" fill="#000"/><rect x="1464.1" y="221.3" width="3.5" height="3.5" fill="#fff"/><rect x="1469.5" y="229.5" width="15" height="11" rx="2.5" fill="#f4f4f4" stroke="#b8c8e0" stroke-width="0.8"/><rect x="1463.8" y="276.7" width="27" height="27" fill="#fff" stroke="#333" stroke-width="1"/><rect x="1463.3" y="276.2" width="28" height="5" fill="#000"/><rect x="1464.3" y="277.2" width="3.5" height="3.5" fill="#fff"/><rect x="1466.2" y="284.5" width="4.6" height="3" fill="#000"/><rect x="1473.3" y="284.7" width="14.3" height="2.6" fill="#fff" stroke="#333" stroke-width="0.6"/><rect x="1466.2" y="290.4" width="4.6" height="3" fill="#000"/><rect x="1473.3" y="290.59999999999997" width="14.3" height="2.6" fill="#fff" stroke="#333" stroke-width="0.6"/><rect x="1466.2" y="296.4" width="4.6" height="3" fill="#000"/><rect x="1473.3" y="296.59999999999997" width="14.3" height="2.6" fill="#fff" stroke="#333" stroke-width="0.6"/><rect x="1463.8" y="322.9" width="27" height="27" fill="#fff" stroke="#333" stroke-width="1"/><rect x="1463.3" y="322.4" width="28" height="5" fill="#000"/><rect x="1464.3" y="323.4" width="3.5" height="3.5" fill="#fff"/><path d="M1470 331.8 Q1477 329.5 1484 331.8 L1478.8 338.5 L1478.8 344.6 L1475.5 343 L1475.5 338.5 Z" fill="#9a9a9a" stroke="#444" stroke-width="0.6"/><ellipse cx="1477" cy="331.8" rx="7" ry="1.2" fill="#555"/><rect x="1463.6" y="368.2" width="27" height="27" fill="#fff" stroke="#333" stroke-width="1"/><rect x="1463.1" y="367.7" width="28" height="5" fill="#000"/><rect x="1464.1" y="368.7" width="3.5" height="3.5" fill="#fff"/><path d="M1468.8 377 L1472.3 380 L1472.3 387 L1468.8 390 Z" fill="#fff" stroke="#333" stroke-width="0.7"/><rect x="1472.3" y="379" width="12" height="9" rx="2" fill="#8a8a8a"/><line x1="1466" y1="383.5" x2="1488" y2="383.5" stroke="#f08080" stroke-width="0.6" stroke-dasharray="1.5 1"/><rect x="1463.6" y="424.9" width="27" height="27" fill="#fff" stroke="#333" stroke-width="1"/><rect x="1463.1" y="424.4" width="28" height="5" fill="#000"/><rect x="1464.1" y="425.4" width="3.5" height="3.5" fill="#fff"/><g fill="#aaa"><rect x="1465.5" y="432" width="10" height="0.8"/><rect x="1465.5" y="435" width="9" height="0.8"/><rect x="1465.5" y="438" width="10.5" height="0.8"/><rect x="1465.5" y="441" width="11" height="0.8"/></g><line x1="1463.5" y1="446.5" x2="1491" y2="446.5" stroke="#333" stroke-width="0.6"/><rect x="1472" y="448.2" width="17" height="1" fill="#777"/><rect x="1465" y="448.2" width="2" height="1" fill="#777"/><rect x="1463.6" y="471.3" width="27" height="27" fill="#fff" stroke="#333" stroke-width="1"/><rect x="1463.1" y="470.8" width="28" height="5" fill="#000"/><rect x="1464.1" y="471.8" width="3.5" height="3.5" fill="#fff"/><rect x="1470" y="480" width="13.5" height="14" rx="0.8" fill="#c08a30"/><rect x="1471.8" y="481.5" width="10" height="11" fill="#f4f4f4"/><rect x="1474" y="479" width="5.5" height="2.5" fill="#888"/><g fill="#ccc"><rect x="1473" y="484" width="7" height="0.7"/><rect x="1473" y="486" width="7" height="0.7"/><rect x="1473" y="488" width="6" height="0.7"/></g></svg>
<div id="status" class="abs"></div>
<div class="abs" style="left:253px;top:802px;width:1px;height:40px;background:#9a9a9a"></div>
<div class="abs st" style="left:0.70px;top:806.00px;letter-spacing:0.200px;font-size:9.6px;line-height:1.15">109,31.4</div>
<div class="abs st" style="left:0.70px;top:826.00px;letter-spacing:0.100px;font-size:9.6px;line-height:1.15">@109,31.4</div>
<div class="abs st" style="left:255.60px;top:806.00px;letter-spacing:0.473px;font-size:9.6px;line-height:1.15">113.4326&lt;16°</div>
<div class="abs st" style="left:255.60px;top:826.00px;letter-spacing:0.375px;font-size:9.6px;line-height:1.15">@113.4326&lt;16°</div>
<div class="abs st" style="left:557.00px;top:816.50px;letter-spacing:0.266px;font-size:9.6px;line-height:1.15">Egység vagy régió kiválasztása</div>
<div class="abs st" style="left:948.60px;top:816.50px;letter-spacing:0.404px;font-size:9.6px;line-height:1.15">Nincs kiválasztott szervezet.</div>
<div class="abs st" style="left:76.00px;top:751.20px;letter-spacing:0.091px;font-size:13px;line-height:1.15;color:#1212d2;-webkit-text-stroke:0.2px #1212d2"><i>Parancs:</i> new</div>
<div class="abs st" style="left:1102.00px;top:732.30px;letter-spacing:0.314px;font-size:13.3px;line-height:1.15;color:#111;-webkit-text-stroke:0">10 &lt; 100</div>
<svg class="abs" style="left:715px;top:804px" width="24" height="34" viewBox="715 804 24 34"><path d="M726.1 806.5 C731 806.5 735 810 735 816 L735 826 C735 832 731 835.4 726.1 835.4 C721.2 835.4 717.3 832 717.3 826 L717.3 816 C717.3 810 721.2 806.5 726.1 806.5 Z" fill="#fff" stroke="#333" stroke-width="0.9"/><path d="M717.3 818 Q726.1 815.5 735 818" fill="none" stroke="#333" stroke-width="0.9"/><line x1="726.1" y1="806.5" x2="726.1" y2="816.8" stroke="#333" stroke-width="0.8"/><rect x="724.6" y="809" width="3" height="6.2" rx="1.5" fill="#fff" stroke="#333" stroke-width="0.8"/></svg>
<div class="abs" style="left:505.9px;top:818.5px;width:7px;height:7px;border-radius:50%;background:#c6c6c6"></div>
<div class="abs" style="left:939.7px;top:818.5px;width:7px;height:7px;border-radius:50%;background:#c6c6c6"></div>
<div class="abs" style="left:1269.0px;top:818.5px;width:7px;height:7px;border-radius:50%;background:#c6c6c6"></div>
</body></html>
